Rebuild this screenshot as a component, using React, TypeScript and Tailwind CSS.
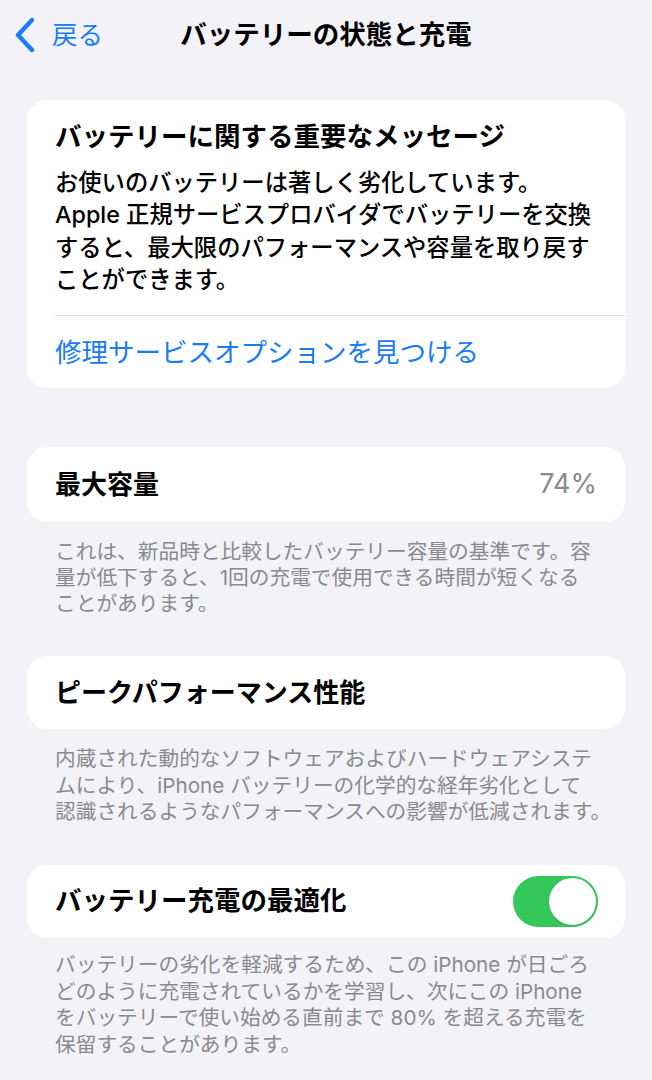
import React, { useState } from "react";

const font = {
  fontFamily: 'Inter, "Noto Sans CJK JP", "Noto Sans", sans-serif',
};

const BackChevron = () => (
  <svg width="22" height="36" viewBox="0 0 22 36" fill="none">
    <path
      d="M18 3 L4 18 L18 33"
      stroke="#1a7cf3"
      strokeWidth="4.4"
      strokeLinecap="round"
      strokeLinejoin="round"
    />
  </svg>
);

const Footer = ({ lines, leading }: { lines: string[]; leading: string }) => (
  <div className={`px-[55px] text-[20.7px] text-[#8a8a8e] ${leading}`}>
    {lines.map((l) => (
      <div key={l} className="whitespace-nowrap">
        {l}
      </div>
    ))}
  </div>
);

const Toggle = ({ on, onChange }: { on: boolean; onChange: () => void }) => (
  <button
    onClick={onChange}
    className={`flex h-[51px] w-[85px] items-center rounded-full p-[2px] ${
      on ? "bg-[#34c759] justify-end" : "bg-[#e5e5ea] justify-start"
    }`}
  >
    <span className="h-[47px] w-[47px] rounded-full bg-white shadow-sm" />
  </button>
);

export default function App() {
  const [optimized, setOptimized] = useState(true);

  return (
    <div className="min-h-screen bg-[#f2f2f7] text-black" style={font}>
      {/* nav bar */}
      <div className="grid h-[70px] grid-cols-[1fr_auto_1fr] items-center">
        <div className="flex items-center gap-[16px] pl-[14px]">
          <BackChevron />
          <span className="text-[25.5px] text-[#1a7cf3]">戻る</span>
        </div>
        <h1 className="text-[26.5px] font-bold">バッテリーの状態と充電</h1>
        <div />
      </div>

      {/* important message */}
      <div className="mx-[27px] mt-[30px] rounded-[20px] bg-white">
        <div className="px-[28px] pt-[18px]">
          <h2 className="text-[26.5px] font-bold leading-[36px]">
            バッテリーに関する重要なメッセージ
          </h2>
          <div className="mt-[13px] text-[23.3px] font-medium leading-[32.3px]">
            <div className="whitespace-nowrap">お使いのバッテリーは著しく劣化しています。</div>
            <div className="whitespace-nowrap">Apple 正規サービスプロバイダでバッテリーを交換</div>
            <div className="whitespace-nowrap">すると、最大限のパフォーマンスや容量を取り戻す</div>
            <div className="whitespace-nowrap">ことができます。</div>
          </div>
        </div>
        <div className="ml-[28px] mt-[19px] h-px bg-[#dedee3]" />
        <div className="py-[18px] pl-[28px] text-[26.5px] leading-[36px] text-[#1a7cf3]">
          修理サービスオプションを見つける
        </div>
      </div>

      {/* maximum capacity */}
      <div className="mx-[27px] mt-[59px] flex h-[75px] items-center justify-between rounded-[20px] bg-white px-[28px]">
        <span className="text-[26px] font-bold">最大容量</span>
        <span className="text-[27px] text-[#8a8a8e]">74%</span>
      </div>
      <div className="mt-[17px]">
        <Footer
          leading="leading-[25.7px]"
          lines={[
            "これは、新品時と比較したバッテリー容量の基準です。容",
            "量が低下すると、1回の充電で使用できる時間が短くなる",
            "ことがあります。",
          ]}
        />
      </div>

      {/* peak performance */}
      <div className="mx-[27px] mt-[40px] flex h-[73px] items-center rounded-[20px] bg-white px-[28px]">
        <span className="text-[26px] font-bold">ピークパフォーマンス性能</span>
      </div>
      <div className="mt-[17px]">
        <Footer
          leading="leading-[26.5px]"
          lines={[
            "内蔵された動的なソフトウェアおよびハードウェアシステ",
            "ムにより、iPhone バッテリーの化学的な経年劣化として",
            "認識されるようなパフォーマンスへの影響が低減されます。",
          ]}
        />
      </div>

      {/* optimized charging */}
      <div className="mx-[27px] mt-[39px] flex h-[73px] items-center justify-between rounded-[20px] bg-white pl-[28px] pr-[27px]">
        <span className="text-[26.5px] font-bold">バッテリー充電の最適化</span>
        <Toggle on={optimized} onChange={() => setOptimized(!optimized)} />
      </div>
      <div className="mt-[14px] pb-[30px]">
        <Footer
          leading="leading-[26.7px]"
          lines={[
            "バッテリーの劣化を軽減するため、この iPhone が日ごろ",
            "どのように充電されているかを学習し、次にこの iPhone",
            "をバッテリーで使い始める直前まで 80% を超える充電を",
            "保留することがあります。",
          ]}
        />
      </div>
    </div>
  );
}
